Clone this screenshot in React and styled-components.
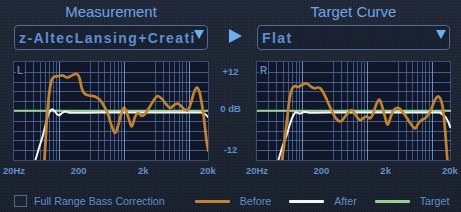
import React from 'react';
import styled, { createGlobalStyle } from 'styled-components';

const GlobalStyle = createGlobalStyle`
  html, body {
    margin: 0;
    padding: 0;
  }
  body {
    background: #1f2634;
    font-family: "Liberation Sans", Arial, sans-serif;
  }
`;

const GW = 194;
const GH = 98;
const GTOP = 62;

const PageStyle = styled.div`
  width: 461px;
  height: 212px;
  overflow: hidden;
  background-color: #1f2634;
  background-image:
    radial-gradient(circle, rgba(0, 0, 0, 0.32) 0.7px, transparent 0.9px),
    linear-gradient(180deg, #232b3a 0%, #1f2735 45%, #1c2330 100%);
  background-size: 3px 3px, 100% 100%;
`;

const PanelsStyle = styled.div`
  display: grid;
  grid-template-columns: ${GW}px 49px ${GW - 1}px;
  grid-template-rows: 25px 37px ${GH}px 22px;
  padding-left: 14px;
`;

const TitleStyle = styled.div`
  grid-row: 1;
  grid-column: ${({ $col }) => $col};
  text-align: center;
  font-size: 15px;
  line-height: 23px;
  color: #6aa6ec;
`;

const DropdownStyle = styled.div`
  grid-row: 2;
  grid-column: ${({ $col }) => $col};
  position: relative;
  align-self: start;
  height: 25px;
  box-sizing: border-box;
  border: 1.5px solid #4a6c96;
  border-radius: 4px;
  background: rgba(22, 30, 46, 0.55);
  padding: 0 4px 0 4px;
  display: flex;
  align-items: center;
`;

const DropdownTextStyle = styled.span`
  font-size: 14px;
  font-weight: 700;
  letter-spacing: 1.4px;
  color: #5c8fcf;
  white-space: nowrap;
`;

const DropArrowStyle = styled.span`
  position: absolute;
  right: 3px;
  top: 4px;
  width: 0;
  height: 0;
  border-left: 5px solid transparent;
  border-right: 5px solid transparent;
  border-top: 9px solid #6cb0f4;
`;

const PlayStyle = styled.div`
  grid-row: 2;
  grid-column: 2;
  align-self: start;
  margin: 4px 0 0 21px;
  width: 0;
  height: 0;
  border-top: 7.5px solid transparent;
  border-bottom: 7.5px solid transparent;
  border-left: 13px solid #6cb0f4;
`;

const ScaleStyle = styled.div`
  grid-row: 3;
  grid-column: 2;
  display: flex;
  flex-direction: column;
  align-items: center;
  padding: 4px 4px 0 0;
`;

const ScaleLabelStyle = styled.span`
  font-size: 9.5px;
  font-weight: 700;
  line-height: 11px;
  color: #5f90ca;
  margin-bottom: ${({ $gap }) => $gap || 0}px;
`;

const GraphStyle = styled.div`
  grid-row: 3;
  grid-column: ${({ $col }) => $col};
  position: relative;
  background: #0f1728;
  box-shadow: 0 0 0 1px rgba(80, 112, 156, 0.55);
`;

const ChannelStyle = styled.span`
  position: absolute;
  left: 2px;
  top: 4px;
  padding: 0 1px;
  background: #0f1728;
  font-size: 10px;
  font-weight: 700;
  line-height: 10px;
  color: #5c84b8;
`;

const AxisStyle = styled.div`
  grid-row: 4;
  grid-column: ${({ $col }) => $col};
  display: flex;
  justify-content: space-between;
  margin: 0 -15px;
  padding-top: 5px;
`;

const AxisLabelStyle = styled.span`
  width: 30px;
  text-align: center;
  font-size: 9.5px;
  font-weight: 700;
  line-height: 11px;
  color: #5f90ca;
`;

const BottomBarStyle = styled.div`
  display: flex;
  align-items: center;
  padding: 11px 0 0 14px;
  height: 16px;
`;

const CheckboxStyle = styled.span`
  width: 13px;
  height: 12px;
  box-sizing: border-box;
  border: 1px solid #4a6a92;
  margin-right: 7px;
`;

const BarTextStyle = styled.span`
  font-size: 10.7px;
  color: #5f8fca;
  white-space: nowrap;
`;

const LegendStyle = styled.div`
  display: flex;
  align-items: center;
  gap: 18px;
  margin-left: 30px;
`;

const LegendItemStyle = styled.div`
  display: flex;
  align-items: center;
  gap: 10px;
`;

const SwatchStyle = styled.span`
  width: 35px;
  height: 3px;
  border-radius: 1px;
  background: ${({ $color }) => $color};
`;

const ORANGE = '#c4832a';
const WHITE = '#f4f6fa';
const GREEN = '#95d48c';

// catmull-rom -> cubic bezier
const smoothPath = (pts) => {
  let d = `M${pts[0][0].toFixed(1)},${pts[0][1].toFixed(1)}`;
  for (let i = 0; i < pts.length - 1; i++) {
    const p0 = pts[i - 1] || pts[i];
    const p1 = pts[i];
    const p2 = pts[i + 1];
    const p3 = pts[i + 2] || p2;
    const c1x = p1[0] + (p2[0] - p0[0]) / 6;
    const c1y = p1[1] + (p2[1] - p0[1]) / 6;
    const c2x = p2[0] - (p3[0] - p1[0]) / 6;
    const c2y = p2[1] - (p3[1] - p1[1]) / 6;
    d += ` C${c1x.toFixed(1)},${c1y.toFixed(1)} ${c2x.toFixed(1)},${c2y.toFixed(1)} ${p2[0].toFixed(1)},${p2[1].toFixed(1)}`;
  }
  return d;
};

const freqs = [];
[20, 200, 2000].forEach((base) => {
  for (let m = 1.5; m <= 5; m += 0.5) freqs.push(base * m);
});
const fx = (f) => (GW * Math.log10(f / 20)) / 3;

const Grid = () => (
  <g shapeRendering="crispEdges">
    {Array.from({ length: 9 }, (_, i) => {
      const y = Math.round(((i + 1) * GH) / 10) + 0.5;
      return <line key={'h' + i} x1="0" x2={GW} y1={y} y2={y} stroke="#4f6fa2" strokeOpacity="0.8" strokeWidth="1" />;
    })}
    {freqs.map((f) => {
      const x = Math.round(fx(f)) + 0.5;
      const major = f === 100 || f === 1000 || f === 10000;
      return (
        <line
          key={f}
          x1={x}
          x2={x}
          y1="0"
          y2={GH}
          stroke={major ? '#7f9fd4' : '#4f6fa2'}
          strokeOpacity={major ? 0.85 : 0.75}
          strokeWidth="1"
        />
      );
    })}
  </g>
);

const toLocal = (pts, left) => pts.map(([x, y]) => [x - left, y - GTOP]);

const Graph = ({ col, channel, left, before, after }) => (
  <GraphStyle $col={col}>
    <svg width={GW} height={GH} viewBox={`0 0 ${GW} ${GH}`} style={{ display: 'block', overflow: 'hidden' }}>
      <Grid />
      <line x1="0" x2={GW} y1="48.7" y2="48.7" stroke={GREEN} strokeWidth="2" />
      <path d={smoothPath(toLocal(after, left))} fill="none" stroke={WHITE} strokeWidth="2" strokeLinejoin="round" />
      <path d={smoothPath(toLocal(before, left))} fill="none" stroke={ORANGE} strokeWidth="2.7" strokeLinejoin="round" />
    </svg>
    <ChannelStyle>{channel}</ChannelStyle>
  </GraphStyle>
);

const leftBefore = [
  [44, 168], [46.5, 125], [49, 95], [51.7, 80], [55, 76.5], [59, 76], [63, 75.5], [67, 77.5],
  [70, 76.5], [74, 74.5], [77, 74], [79.5, 78], [82, 89], [85, 94], [89, 95.5], [95, 96.5],
  [100, 100], [104, 106], [107.5, 113], [111, 124], [115, 133], [118, 126], [121, 115],
  [124.5, 107.7], [128.5, 118], [131.7, 126.5], [135, 117], [138, 113], [141.7, 116], [145, 114],
  [149, 108], [153.3, 101], [157.5, 96], [162, 99], [166, 104], [170, 108], [174, 105],
  [177.5, 103.5], [181, 106], [184.5, 109.5], [188, 110], [191, 103], [193.5, 94], [196.7, 87.5],
  [199.5, 92], [201.5, 102], [203.5, 115], [205.5, 132], [207, 144], [208.5, 152],
];

const leftAfter = [
  [34.5, 163], [39, 148], [43, 135], [46, 123], [48.5, 114], [51.5, 109.5], [54, 110.5],
  [56.5, 113.5], [59.3, 115.3], [62, 113], [64.5, 111.8], [67, 112], [71, 112.8], [80, 112.8],
  [100, 112.6], [150, 112.5], [195, 112.5], [202, 112.8], [205.5, 114.5], [208.5, 117.5],
];

const rightBefore = [
  [281, 168], [284, 145], [287, 120], [289.5, 99], [292, 89], [295, 86], [298, 87], [301, 85.5],
  [304, 84], [306.7, 83.5], [309, 85], [311.5, 87], [315, 88.3], [318, 87.5], [321, 89], [324, 94],
  [327, 100], [330, 107], [333, 113], [336, 118.5], [340.5, 121.5], [344, 118], [347, 114],
  [351.5, 110], [355, 114], [358, 118.5], [360.5, 120], [363.5, 118], [366.5, 116.5], [370, 118.3],
  [373, 114], [376, 105], [379.3, 99.5], [382, 106], [384.5, 115], [387.3, 124.5], [390, 119],
  [393, 111], [396.7, 108], [400, 109], [403.3, 113], [407, 118], [410.5, 123.5], [415, 128.5],
  [418, 124], [421, 120.5], [425, 118.3], [428, 115], [431, 110], [434, 102], [436.5, 97.5],
  [438.5, 96.5], [440.5, 99], [442.5, 106], [444, 118], [445.5, 135], [447, 155], [448, 166],
];

const rightAfter = [
  [277.5, 163], [282, 148], [286.7, 135], [290, 124], [293, 116], [295.5, 112.3], [298, 113],
  [300.5, 113.5], [303, 112.3], [306, 112], [310, 112.7], [330, 112.5], [400, 112.5], [437, 112.6],
  [441, 113.5], [444, 115.5], [446.5, 118.5], [448.5, 122.5], [450.5, 128],
];

const axisLabels = ['20Hz', '200', '2k', '20k'];

const App = () => {
  return (
    <PageStyle>
      <GlobalStyle />
      <PanelsStyle>
        <TitleStyle $col={1}>Measurement</TitleStyle>
        <TitleStyle $col={3}>Target Curve</TitleStyle>

        <DropdownStyle $col={1}>
          <DropdownTextStyle>z-AltecLansing+Creati</DropdownTextStyle>
          <DropArrowStyle />
        </DropdownStyle>
        <PlayStyle />
        <DropdownStyle $col={3}>
          <DropdownTextStyle>Flat</DropdownTextStyle>
          <DropArrowStyle />
        </DropdownStyle>

        <Graph col={1} channel="L" left={14} before={leftBefore} after={leftAfter} />
        <ScaleStyle>
          <ScaleLabelStyle $gap={26}>+12</ScaleLabelStyle>
          <ScaleLabelStyle $gap={30}>0 dB</ScaleLabelStyle>
          <ScaleLabelStyle>-12</ScaleLabelStyle>
        </ScaleStyle>
        <Graph col={3} channel="R" left={257} before={rightBefore} after={rightAfter} />

        <AxisStyle $col={1}>
          {axisLabels.map((l) => <AxisLabelStyle key={l}>{l}</AxisLabelStyle>)}
        </AxisStyle>
        <AxisStyle $col={3}>
          {axisLabels.map((l) => <AxisLabelStyle key={l}>{l}</AxisLabelStyle>)}
        </AxisStyle>
      </PanelsStyle>

      <BottomBarStyle>
        <CheckboxStyle />
        <BarTextStyle>Full Range Bass Correction</BarTextStyle>
        <LegendStyle>
          <LegendItemStyle>
            <SwatchStyle $color={ORANGE} />
            <BarTextStyle>Before</BarTextStyle>
          </LegendItemStyle>
          <LegendItemStyle>
            <SwatchStyle $color={WHITE} />
            <BarTextStyle>After</BarTextStyle>
          </LegendItemStyle>
          <LegendItemStyle>
            <SwatchStyle $color={GREEN} />
            <BarTextStyle>Target</BarTextStyle>
          </LegendItemStyle>
        </LegendStyle>
      </BottomBarStyle>
    </PageStyle>
  );
};

export default App;
